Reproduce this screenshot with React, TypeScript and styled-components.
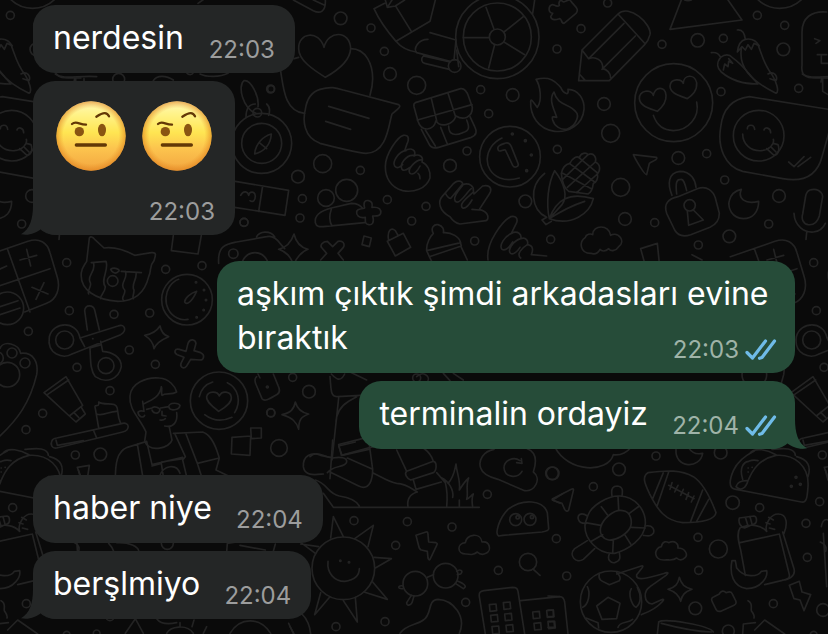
import React from "react";
import styled, { createGlobalStyle, css } from "styled-components";

const GlobalStyle = createGlobalStyle`
  *, *::before, *::after { box-sizing: border-box; }
  html, body, #root { height: 100%; }
  body {
    margin: 0;
    background: #0a0a0a;
    font-family: Inter, "Liberation Sans", sans-serif;
    overflow: hidden;
  }
`;

type Side = "in" | "out";

const Screen = styled.main`
  position: relative;
  min-height: 100%;
  background: #0a0a0a;
`;

const WallpaperLayer = styled.svg`
  position: absolute;
  inset: 0;
  width: 100%;
  height: 100%;
  fill: none;
  stroke: #232323;
  stroke-width: 5;
  stroke-linecap: round;
  stroke-linejoin: round;
`;

const Conversation = styled.ol`
  position: relative;
  display: flex;
  flex-direction: column;
  gap: 26px;
  margin: 0;
  padding: 5px 33px 15px;
  list-style: none;
`;

const Group = styled.li<{ $side: Side }>`
  display: flex;
  flex-direction: column;
  align-items: ${(p) => (p.$side === "out" ? "flex-end" : "flex-start")};
  gap: 8px;
`;

const Bubble = styled.article<{ $side: Side }>`
  position: relative;
  isolation: isolate;
  display: grid;
  max-width: min(578px, 100%);
  padding: 11px 20px 7px;
  border-radius: 22px;
  color: #fff;
  background: #242626;
  ${(p) =>
    p.$side === "out" &&
    css`
      padding-right: 18px;
      background: #264c39;
    `}
`;

const Text = styled.p<{ $side: Side }>`
  grid-area: 1 / 1;
  margin: 0;
  padding-bottom: 6px;
  font-size: 32px;
  line-height: 44px;
  &::after {
    content: "";
    display: inline-block;
    width: ${(p) => (p.$side === "out" ? 129 : 91)}px;
  }
`;

const Emojis = styled.div`
  grid-area: 1 / 1;
  display: flex;
  gap: 16px;
  padding: 9px 3px 57px;
`;

const Meta = styled.footer`
  grid-area: 1 / 1;
  place-self: end;
  display: flex;
  align-items: center;
  gap: 6px;
  height: 32px;
`;

const Time = styled.time<{ $side: Side }>`
  font-size: 24px;
  line-height: 32px;
  color: ${(p) => (p.$side === "out" ? "#9fb3a8" : "#9c9d9d")};
`;

const TailShape = styled.svg<{ $side: Side }>`
  position: absolute;
  z-index: -1;
  bottom: 0;
  width: 36px;
  height: 30px;
  ${(p) =>
    p.$side === "out"
      ? css`
          right: -12px;
          fill: #264c39;
          transform: scaleX(-1);
        `
      : css`
          left: -12px;
          fill: #242626;
        `}
`;

function Tail({ side }: { side: Side }) {
  return (
    <TailShape $side={side} viewBox="0 0 36 30" aria-hidden="true">
      <path d="M12 0C12 14 9 24 0 29.300C8 31 15 28 20 24C25 28 30 30 36 30V0Z" />
    </TailShape>
  );
}

function ReadTicks() {
  return (
    <svg width="32" height="22" viewBox="0 0 32 22" role="img" aria-label="Read" fill="none" stroke="#6fbbe8" strokeWidth="3.200" strokeLinecap="round" strokeLinejoin="round">
      <path d="M2 13.500L7.500 19L20.500 2" />
      <path d="M14.500 19.300L17 18.500L29.500 2" />
    </svg>
  );
}

function RaisedBrowFace({ id }: { id: string }) {
  return (
    <svg width="70" height="70" viewBox="0 0 210 210" role="img" aria-label="Face with raised eyebrow">
      <defs>
        <linearGradient id={`${id}-skin`} x1="0" y1="0" x2="0" y2="1">
          <stop offset="0" stopColor="#fff9b8" />
          <stop offset="0.180" stopColor="#fff38a" />
          <stop offset="0.450" stopColor="#ffe552" />
          <stop offset="0.680" stopColor="#fcc44e" />
          <stop offset="1" stopColor="#f3a640" />
        </linearGradient>
        <radialGradient id={`${id}-edge`} cx="0.500" cy="0.500" r="0.500">
          <stop offset="0.800" stopColor="#e88a20" stopOpacity="0" />
          <stop offset="1" stopColor="#dd7e1c" stopOpacity="0.600" />
        </radialGradient>
      </defs>
      <circle cx="105" cy="105" r="104" fill={`url(#${id}-skin)`} />
      <circle cx="105" cy="105" r="104" fill={`url(#${id}-edge)`} />
      <circle cx="70" cy="92" r="14" fill="#8a5512" />
      <ellipse cx="138" cy="87" rx="12" ry="19" fill="#8a5512" />
      <g fill="none" stroke="#633806" strokeLinecap="round" strokeLinejoin="round">
        <path d="M48 69C60 58 68 70 90 71" strokeWidth="7" />
        <path d="M121 47C143 33 153 33 159 46" strokeWidth="7" />
        <path d="M61 132H148" strokeWidth="10" />
      </g>
    </svg>
  );
}

type Doodle = { at: [number, number]; dots: number[][]; lines: string[] };

const doodles: Doodle[] = [
  {
    at: [0, 0],
    dots: [[356, 238, 18], [785, 430, 90], [785, 430, 60], [812, 267, 12], [732, 667, 12], [772, 338, 13]],
    lines: [
      "M768 340C728 326 712 256 732 242C752 238 778 288 774 320",
      "M738 352C738 320 750 312 766 312M800 312C812 322 810 334 806 346",
      "M764 462C766 432 790 408 814 402C812 434 792 454 764 462ZM778 428L800 446",
      "M594 10L620-8M166 222C192 240 230 226 290 230M224 236L222 246M252 236V246M460 242C470 224 500 226 520 240M560 218C566 226 576 226 580 218M600 222C620 232 660 232 684 220",
    ],
  },
  {
    at: [810, 0],
    dots: [
      [212, 55, 19], [303, 84, 12], [343, 154, 12], [360, 222, 19], [440, 256, 27], [3, 267, 10], [158, 491, 27], [84, 530, 19],
      [271, 511, 12], [97, 596, 12], [90, 654, 12], [352, 599, 12], [425, 663, 12], [468, 619, 12], [540, 497, 19], [591, 453, 12],
      [656, 341, 12], [632, 269, 12], [728, 285, 19], [766, 604, 19], [614, 723, 12], [682, 111, 125], [682, 111, 102], [682, 111, 24],
      [554, 198, 19], [168, 594, 25], [230, 571, 33], [720, 470, 91], [727, 402, 3], [766, 422, 3], [784, 465, 3], [770, 512, 3],
    ],
    lines: [
      "M166 232C128 208 86 180 86 146C84 98 146 88 162 142C174 90 240 90 242 146C240 182 202 212 166 232Z",
      "M242 146C290 146 308 196 308 236C308 256 304 272 300 286M86 172L72 176M32 214C40 262 44 336 104 340",
      "M150 268C184 258 200 264 220 270L386 314C398 320 374 334 366 342C356 372 352 460 288 460C270 460 180 438 150 430C100 412 98 360 106 328C110 300 124 276 150 268Z",
      "M176 319L297 355M167 364L242 388",
      "M70 0L130 32C150 42 168 36 166 0M130 0L164 16",
      "M344 10L312 26C330 66 350 92 378 124L480 64L496 0M378 124C396 146 424 154 438 156M378 20L424 94M346 0L352 22L376 18L404 0M352 22C360 10 362 6 366 0",
      "M480 98L558 120M474 118C442 118 430 148 440 158L540 184M558 120L552 180M460 168C452 176 454 188 464 190L538 208M460 168L540 186",
      "M648 22L672 88M760 50L702 96M580 113H658M656 204L674 134M764 164L702 126M788 40L794 0M560 150L566 200",
      "M436 308L572 266C584 264 590 272 596 290L607 322C608 352 580 362 558 348C548 376 510 384 498 362C490 394 454 396 444 364L432 320Q430 310 436 308Z",
      "M484 296L500 362M534 280L556 348M442 360L606 314M454 388L476 430C482 444 492 446 506 442L604 412C622 404 620 392 614 380L600 350M466 390L496 438M512 382L532 432M536 378C536 406 556 408 578 398C600 392 598 380 590 360",
      "M346 500C346 460 384 410 400 406C418 404 418 418 410 434L404 452C426 440 440 452 432 468C446 460 462 470 456 486C474 494 482 514 480 534C468 568 430 578 398 572C360 562 346 530 346 500ZM408 452C386 454 366 486 374 498C382 508 392 500 398 494M430 466C408 464 388 494 396 508C404 516 412 508 420 502M456 480C438 478 410 508 420 520C432 528 444 510 450 498M444 520Q450 524 450 536",
      "M696 414C640 440 636 512 690 534C710 542 728 540 748 534M686 452C678 440 690 434 704 430C714 426 720 430 724 440L744 490C748 500 734 506 728 496L706 450C698 448 692 456 686 452Z",
      "M136 668C132 640 160 630 184 624L244 610C262 610 272 616 278 626M136 668C140 682 150 680 160 680L284 668M184 628C176 650 180 668 186 678M284 624C278 604 288 600 296 602C306 604 308 612 306 622C330 620 334 630 332 640C328 650 318 648 308 648C314 668 306 676 296 674C284 672 286 664 286 652C266 656 258 644 260 634C264 624 274 628 284 624Z",
      "M540 650C506 632 504 604 516 590L544 558C562 534 580 544 578 554C598 546 612 560 610 572L612 582L638 558C664 552 666 570 658 582L628 628C660 636 656 658 648 662L570 672Q552 668 540 650ZM576 554L546 590C542 600 534 594 526 580M578 556C562 574 544 600 560 606C572 610 592 574 604 566M610 576C596 590 564 612 578 624C588 628 600 610 606 600M606 628L628 630",
      "M72 702C78 728 90 742 114 748C92 756 80 772 70 796C64 770 50 756 26 748C50 742 64 726 72 702Z",
      "M172 724L188 740L204 724C218 720 226 732 220 742L204 760L220 780M172 724C158 724 148 736 156 744L170 760L152 780M282 708L304 714L298 740L276 734ZM352 724L400 700L422 742L376 768ZM356 722C350 690 364 682 376 692L384 706",
      "M470 752C468 730 482 708 490 700C480 682 494 672 504 674C520 678 522 690 520 698C546 696 568 712 572 728ZM470 752L478 770L574 738L570 724M478 770L488 790M574 742L592 780",
      "M654 780C646 726 700 662 722 650C738 646 744 656 740 668L724 700C744 690 756 704 752 716C768 710 776 724 772 734C790 736 790 750 784 764M726 700C704 708 686 736 696 748C708 756 722 736 728 726M752 716C730 722 710 752 722 760C730 766 744 752 750 742M772 734C756 744 738 762 752 774M784 764L830 768",
    ],
  },
  {
    at: [1644, 0],
    dots: [
      [179, 9, 12], [99, 86, 12], [27, 147, 12], [342, 133, 12], [449, 121, 20], [526, 115, 12], [628, 46, 12], [710, 76, 12],
      [706, 148, 19], [752, 265, 12], [168, 312, 19], [188, 400, 27], [519, 275, 12], [28, 448, 12], [391, 474, 19], [476, 461, 12],
      [530, 540, 12], [218, 562, 27], [231, 657, 19], [320, 668, 12], [544, 709, 19], [451, 735, 12], [693, 588, 19], [662, 672, 12],
      [377, 308, 117], [632, 407, 76], [425, 616, 17], [695, -70, 95], [8, 718, 12],
    ],
    lines: [
      "M40 0C46 14 60-4 66 0C78 18 96 26 84 40L48 70C38 70 42 54 34 56C24 60 12 62 8 50L14 40C0 38 0 18 12 14C18 12 26 24 34 16Q30 4 40 0ZM400 0L366 88L582 60L540 0M410 0Q420 4 430 0",
      "M92 242L102 150L210 42C244 10 312 72 306 104C302 120 296 128 290 134L184 242ZM102 150L122 176C142 168 166 180 164 206C176 208 188 218 188 234M122 176L228 70M162 208L262 108M210 42L292 132M94 222L112 242",
      "M-36 238C12 226 26 250 38 262C46 280 64 290 60 268C92 268 110 300 108 328C104 376 60 398 20 394C-30 388-54 346-52 304C-50 294-44 308-32 322C-16 300-24 256-36 238ZM18 276C0 300 20 330 26 352C16 352 10 344 14 360C20 380 38 390 56 388C86 378 94 346 84 336C66 310 28 318 18 276Z",
      "M328 334C302 324 276 318 274 296C274 270 310 266 316 286C320 260 352 256 354 286C356 308 342 322 328 334ZM418 296C392 286 366 280 366 258C368 234 400 236 406 250C406 224 440 220 446 248C448 272 434 284 418 296ZM316 346C328 380 348 390 376 392C420 392 456 352 446 306",
      "M490 158C504 156 514 164 518 172M518 172C504 190 508 206 520 216C550 242 590 252 628 252M518 172C530 162 544 162 552 172C590 198 606 228 630 252M526 210L530 192L540 200L542 184L554 190L542 176",
      "M568 90C584 88 590 100 592 118M592 118C574 122 570 140 568 156L582 140L592 150L600 134L610 148L618 130L634 138C626 124 612 114 592 118M580 146C572 200 604 240 684 280C696 274 682 240 672 224C648 194 644 170 632 140M660 222C680 212 690 230 684 242L666 236",
      "M836 36C790 32 762 54 762 96V196C758 228 776 234 800 234H840M824 236V274L840 284M800 116L816 122L804 130M808 164H836M820 164V190H840",
      "M604 290L842 328M604 290C554 296 524 326 518 382C508 440 530 500 584 514L704 536C770 548 808 524 822 470L842 400M598 386C598 374 618 370 620 388M648 390C650 380 668 382 668 398M584 402C584 430 606 454 640 452C664 450 680 432 676 418M656 446L678 466C694 464 694 444 690 434L676 430M668 440L684 456M722 486L738 500L768 470M750 500L788 472",
      "M256 464L326 472C330 480 312 484 304 490L296 524C290 526 262 478 256 464Z",
      "M20 512C50 550 60 590 42 614L4 656C-6 610 0 550 20 512ZM4 656C24 600 62 574 136 596C126 640 70 680 4 656ZM4 656Q60 620 110 604M-4 652L-18 660L-6 674L10 664M-10 520C-60 560-50 630-4 652",
      "M40 520C44 500 56 492 66 490C72 474 88 466 94 474C98 456 116 458 120 464C138 456 146 474 142 486C160 494 156 514 148 520C152 536 144 548 136 550C134 566 128 578 120 582L62 574C50 566 42 544 40 520ZM44 520L130 566M64 490L140 546M92 472L150 520M58 562L142 486M44 538L120 464M86 578L148 522",
      "M372 586C358 552 360 518 396 514C430 514 442 542 444 562M386 582C382 546 386 538 398 538C408 536 412 556 416 572M390 590L448 566C478 556 496 574 502 594L514 640C514 660 504 674 486 682L428 704C404 712 388 704 380 690L356 640C346 610 362 596 390 590ZM418 634L422 676L466 660L436 630",
      "M580 568C568 596 592 614 632 604C632 636 614 656 586 656C552 654 538 624 544 602C548 584 562 572 580 568ZM786 570C806 564 822 574 824 590L814 648C808 668 796 676 780 674C764 670 760 656 764 642L772 594Q774 574 786 570ZM738 640C740 680 770 698 796 696C812 694 826 684 832 670M776 698L774 718",
      "M128 760C96 760 92 726 112 712C114 702 128 700 134 704C134 674 184 672 188 706C212 694 234 724 212 740C204 752 190 756 182 746C172 756 160 754 156 748C150 760 140 764 128 760ZM278 746L328 730L334 790M278 746L290 790M432 764L462 780",
    ],
  },
  {
    at: [540, 540],
    dots: [[192, 127, 12], [160, 221, 14], [225, 258, 40]],
    lines: [
      "M166 4L326 31L315 106L164 82M248 18L236 94M182 46C190 30 204 34 206 46C208 34 224 32 226 48C226 62 218 68 210 62",
      "M116 250C112 196 140 192 170 186L260 170C276 166 290 176 300 190L314 206M230 170C238 154 270 150 284 170",
    ],
  },
  {
    at: [0, 690],
    dots: [
      [200, 98, 12], [497, 118, 12], [606, 107, 12], [208, 242, 12], [342, 253, 12], [449, 249, 12], [85, 304, 12], [388, 360, 12],
      [231, 412, 12], [466, 403, 12], [330, 482, 12], [128, 550, 12], [78, 599, 12], [301, 673, 19], [813, 549, 12],
      [561, 209, 76], [194, 330, 27], [318, 407, 24], [657, 512, 86], [338, 153, 16], [22, 235, 49], [36, 369, 15], [75, 399, 15], [22, 434, 37],
      [612, 180, 2], [618, 210, 2], [611, 240, 2], [590, 262, 2], [588, 157, 2], [802, 471, 3], [-8, 384, 18],
    ],
    lines: [
      "M-50 80L84 34C118 22 142 38 150 68L172 142C182 176 170 208 140 220L74 246M22 56L90 246M-10 170L150 116M60 90L110 76M80 58L92 108M96 172L144 192M132 158L108 208M-20 126L20 108M0 230L54 212M0 254L60 234",
      "M268 24Q274 16 284 28L312 54C342 50 370 58 404 76L454 68C472 66 466 78 462 92C446 110 456 120 446 140C434 190 400 214 354 214C290 210 238 180 244 128C246 112 254 104 260 94ZM274 98L318 94C328 120 300 150 316 170C316 186 300 196 302 206M280 98C290 124 260 136 270 156C278 168 260 180 266 192M364 124L424 128M376 124C386 146 356 160 374 180C378 192 362 202 370 210M408 128C412 148 392 164 402 180C402 196 396 200 400 206M332 118C342 110 362 118 356 124C348 134 336 128 332 118",
      "M520 16L514 62L594 72L604 16",
      "M536 148C490 164 482 240 532 264C544 270 556 270 564 268M590 184C572 190 554 204 554 216C560 226 574 218 590 184Z",
      "M240 324C230 270 160 274 148 320C140 374 190 388 216 372L362 314C384 300 372 280 354 288L240 324ZM262 300L254 242C256 222 280 224 284 240L298 300M240 324L254 350M270 354C272 390 270 420 286 440C318 462 356 448 364 410C364 380 336 366 308 364L302 334M270 354L304 344M278 326H279",
      "M480 288C484 308 492 316 506 320C482 330 468 340 462 356C460 338 450 326 434 316C456 312 470 304 480 288ZM564 340C570 324 586 328 588 340L582 362L602 368C616 374 612 390 600 390L572 388L560 408C550 420 538 410 544 398L552 382L532 374C520 368 524 354 538 358L558 364Z",
      "M0 355C10 330 56 340 62 370C100 366 116 396 110 434C90 520 50 570 0 618",
      "M132 488L198 440L248 526L208 558ZM142 494L206 450M208 558L228 576L256 552L244 532M222 548L236 562",
      "M156 632C150 644 156 656 170 654L368 606C392 600 388 576 368 580L170 624Q158 626 156 632ZM280 600L290 624M296 594L286 536C280 518 300 536 296 516C312 528 344 514 350 530C356 540 350 556 362 580M290 552C310 560 330 542 352 544",
      "M438 606C420 564 386 540 390 498C392 460 440 440 478 444C508 446 526 470 530 486C514 496 496 488 486 496C482 488 488 478 484 470C480 502 452 512 430 522M438 606L434 634C450 670 510 654 516 630L508 592M414 546C414 560 430 566 434 556M428 514L432 544C420 540 416 544 414 548M440 538L456 534C462 526 480 534 480 540C474 556 458 548 456 540M482 534L506 530C508 516 536 518 540 526C538 540 510 546 506 530M530 548C534 576 520 594 494 588M486 544V556L498 558M480 570Q490 572 496 566",
      "M440 634L382 652C350 666 346 700 346 750M412 642L430 750M440 634L456 704L548 682M520 610L608 606C640 616 652 666 658 684L592 700L608 750M524 610L556 680L548 690L560 740M558 612L592 700M456 708L484 700L490 740M484 696L550 686M478 740C490 704 530 700 540 730M658 684L648 720L690 740",
      "M598 500Q606 466 638 456M682 458C716 474 724 516 704 548M614 554C640 574 670 574 696 562M656 544C640 532 618 516 620 500C624 482 652 482 658 498C666 480 692 484 694 502C696 520 672 534 656 544Z",
      "M696 622L752 618L750 676L694 672ZM752 594H784V624L754 626ZM770 440C762 446 766 460 770 468L786 506C794 516 806 508 830 494C842 488 838 474 834 466L820 432M774 432L780 444",
      "M232 712L268 706L262 746M232 712L244 744M886 516C892 538 904 548 926 552C904 560 896 568 896 598C890 576 878 564 846 554C872 548 882 538 886 516Z",
    ],
  },
  {
    at: [630, 750],
    dots: [[248, 382, 12], [297, 425, 19], [182, 488, 12], [207, 594, 25], [620, 384, 12]],
    lines: [
      "M360 380C364 420 360 440 384 440L450 436M404 372C390 400 376 384 364 372M386 444L366 630M416 454L440 440M416 454C390 470 378 490 378 520M420 366L470 390M620 380C640 360 660 380 654 392M700 370L720 392M730 370L760 390",
      "M386 584L480 560M386 584L394 616L490 590M300 620C320 600 340 620 360 622",
    ],
  },
  {
    at: [0, 1320],
    dots: [[502, 310, 18], [330, 530, 12], [290, 580, 10], [200, 584, 10]],
    lines: [
      "M168 0L172 16L250 2M220 306C234 312 240 320 236 334M326 310C336 320 340 330 342 336M350 308C390 306 414 320 416 332M680 336L682 310L710 306M720 316L796 330M820 334L826 312M376 580L406 536L430 580M470 536C480 550 500 554 530 548M500 580C510 560 560 550 580 580M540 548V560M582 540L576 560M690 580C720 530 780 530 812 580M620 560L610 580M866 550L880 580",
    ],
  },
  {
    at: [870, 1320],
    dots: [
      [786, 100, 19], [592, 163, 12], [192, 242, 12], [352, 245, 12], [486, 261, 12], [317, 316, 12], [625, 391, 12], [527, 487, 12],
      [285, 545, 12], [138, 560, 12], [160, 385, 94], [677, 239, 18], [720, 238, 18], [683, 232, 5], [726, 231, 5],
      [376, 431, 37], [467, 407, 37], [714, 366, 26], [151, 362, 2], [177, 367, 2],
    ],
    lines: [
      "M128 0L120 116M100 102C76 104 44 110 40 80C38 48 64 34 92 46L128 54C150 50 172 52 170 66C166 84 130 74 112 98M146 18L196 6M146 18L156 46L236 28M172 54L248 88L236 0M120 96L206 138C240 154 248 116 248 88M248 98C276 112 296 126 320 130C352 132 364 146 382 156C360 162 350 176 354 202M76 120C112 130 112 160 148 168C176 172 198 180 208 198M100 160L130 202H568",
      "M320 30L350 94M350 94L430 64C442 66 440 92 430 98L362 120C350 116 342 100 350 94ZM370 120L378 148L454 126M400 24C420 38 426 50 430 64M440 98L466 128C472 152 472 180 470 200M456 114C476 124 492 150 488 172M474 130C492 112 494 90 498 72C500 100 512 120 508 150C516 138 524 124 536 114C526 136 536 160 530 178C538 174 544 166 550 162C544 176 546 190 548 202M508 180V202",
      "M612 28C580 34 564 60 572 84C578 104 600 112 624 118L704 152C734 156 756 116 730 96C742 60 738 36 712 26M690 62C670 48 642 62 642 84C644 112 682 118 696 94M680 68L696 70L694 56",
      "M122 294L130 230L160 290M194 296L250 256L234 320M252 352L304 356L256 384M248 426L292 478L222 456M196 472L202 546L160 482M92 458L74 524L120 470M32 312L86 320M36 310L76 340M114 364C110 400 134 424 164 424C190 420 208 408 208 386",
      "M378 286L408 276Q414 274 414 284L416 306L438 308Q444 310 440 316L420 358Q416 362 414 354L412 334L394 330Q388 328 386 318Z",
      "M528 342C500 342 500 310 526 308C528 282 572 276 576 306C600 302 606 332 588 340C576 346 568 342 562 336C550 346 540 344 528 342Z",
      "M412 412L430 404M364 466L350 488C350 500 362 496 366 488L372 468M340 438C322 434 322 448 338 446M500 394C510 386 522 392 512 402L502 404M496 430L520 446C532 440 524 432 504 424M730 388L750 406",
      "M626 288C614 282 626 236 654 208C700 174 760 180 772 218L776 266C776 272 766 274 756 276L638 286ZM788 180L820 160M788 180L810 190",
      "M330 580C350 552 380 556 400 540C428 524 410 480 444 478C490 480 530 530 508 580M36 522C54 540 60 560 62 582M0 560L12 582",
      "M586 582L568 470C566 456 572 454 582 452L668 442C680 442 682 446 684 454L704 582M692 482L810 470M598 494L618 492L620 512L600 514ZM640 488L660 486L662 506L642 508ZM602 526L622 524L624 544L604 546ZM644 522L664 520L666 540L646 542ZM606 560L626 558L628 580L608 582ZM648 556L668 554L670 574L650 576ZM728 516L748 514L750 534L730 536ZM770 512L790 510L792 530L772 532ZM732 550L752 548L754 568L734 570ZM774 546L794 544L796 564L776 566Z",
    ],
  },
  {
    at: [1644, 1320],
    dots: [
      [324, 48, 12], [14, 100, 19], [213, 88, 19], [136, 140, 12], [518, 38, 19], [554, 188, 20], [635, 203, 12], [823, 45, 12],
      [815, 185, 12], [774, 250, 12], [778, 352, 12], [450, 292, 12], [511, 327, 27], [452, 391, 12], [442, 505, 19], [676, 491, 12],
      [825, 510, 19], [56, 408, 12], [25, 296, 12], [189, 485, 92], [744, 112, 3], [757, 133, 3], [730, 139, 3], [541, 573, 18],
    ],
    lines: [
      "M20 20C60 100 180 100 196 44C220 48 240 34 250 20M384 28C380 86 456 88 464 40C444 44 430 36 424 26",
      "M14 176L70 148Q78 144 76 152L62 210Q56 218 50 208L42 190L18 182Q10 180 14 176Z",
      "M120 226C130 196 180 166 216 168C260 170 294 208 292 252C290 296 240 330 200 340C150 344 104 294 112 248ZM158 262C164 236 200 206 224 212C250 214 254 248 246 264C234 284 204 302 182 300C162 296 154 280 158 262ZM210 170L212 208M274 198L244 220M292 264L250 262M248 312L230 284M194 340L196 300M130 304L164 284M112 248L158 256M160 200L178 224",
      "M192 168C188 144 196 138 208 138C226 140 224 154 222 168M118 228C98 214 86 226 92 240C96 252 108 250 116 250M292 258C316 254 320 270 316 280C308 290 300 288 286 286M184 342C176 360 190 370 200 368C220 362 216 350 214 338M118 302L80 326C60 346 84 372 106 358L140 326",
      "M300 98C360 90 400 90 436 110C464 128 486 170 504 218C500 244 440 248 404 248C352 242 330 212 304 160C292 134 280 110 300 98ZM346 98L314 176M362 96L328 196M464 150L428 244M482 178L446 244M362 136L438 176M372 128L366 148M390 136L380 156M406 148L398 166M422 158L414 178M438 168L430 186",
      "M564 148C538 146 546 116 556 92C570 60 600 42 620 32M564 148L760 186C778 190 778 164 780 140C784 78 740 42 684 46C630 58 612 94 600 122C594 142 580 156 564 140C568 126 584 122 596 122M584 118C574 88 584 66 602 64C612 60 622 60 630 62M606 40C620 20 660 30 684 44M672 28C700 26 740 20 742 46M746 50C780 58 790 80 780 110M600 84H601M612 82H613M600 96H601",
      "M574 234C570 248 578 262 590 264L618 252C628 250 628 230 618 228ZM592 232L600 258M606 230L612 252M576 264C566 278 570 300 578 330L592 406M576 308L694 282M580 262C610 250 640 256 656 274M694 282L724 404C726 414 720 418 700 422L650 434M704 276L738 386C744 408 722 420 704 420M656 274C648 248 672 222 690 222C720 222 718 256 708 280M662 232L676 240M654 248L666 252M664 264L680 268",
      "M552 362C544 400 554 440 596 446C640 446 660 410 656 392L640 394C630 410 590 416 566 384L562 362Z",
      "M206 402L280 378Q288 376 282 384L266 404C262 426 300 414 356 398Q364 398 354 406L306 440C286 452 286 488 312 492L344 478Q350 478 342 486C320 510 300 516 280 524",
      "M146 498L180 472L216 490L206 536L162 538ZM154 402C148 424 170 426 184 434L214 422C222 412 212 404 206 398M118 440C128 458 122 494 104 502M250 446C240 462 250 494 264 502C280 490 280 466 268 442M114 534L150 548L152 564M210 562C214 544 240 550 254 538",
      "M394 412C400 434 410 442 432 448C410 456 402 464 398 484C392 464 382 456 360 448C382 442 390 432 394 412Z",
      "M350 360C316 362 316 324 340 320C344 302 356 304 362 308C380 300 392 310 390 324C412 324 420 344 412 352C402 362 392 360 386 354C374 364 362 358 350 360Z",
      "M498 470C488 474 490 480 494 488L504 508C508 516 514 516 522 512L558 496C566 492 566 486 560 476L552 460C548 452 540 456 534 458C526 450 516 454 514 462ZM600 482C616 490 608 502 610 512C616 520 620 528 618 534",
      "M724 436L754 424L762 456L788 464L768 512L756 480L738 476ZM332 546C350 534 484 556 496 576M332 546L328 582M340 550C370 558 430 574 490 576M584 582L586 552L622 548M620 570L650 540L710 582M832 90L840 120M820 260C824 236 836 236 842 242M826 280L836 440M0 468L36 470C44 470 48 476 50 486L60 582M0 510L16 510V530H0M0 544L18 544L20 562H0",
    ],
  },
];

/* The doodle sheet is 2241 units wide and repeats sideways. */
const repeats = [-2241, 0, 2241];

function Wallpaper() {
  return (
    <WallpaperLayer viewBox="0 0 2484 1902" preserveAspectRatio="xMidYMid slice" aria-hidden="true">
      <defs>
        <g id="doodle-sheet">
          {doodles.map((d, i) => (
            <g key={i} transform={`translate(${d.at[0]} ${d.at[1]})`}>
              {d.dots.map(([x, y, r], n) => (
                <circle key={n} cx={x} cy={y} r={r} />
              ))}
              {d.lines.map((line, n) => (
                <path key={n} d={line} />
              ))}
            </g>
          ))}
        </g>
      </defs>
      {repeats.map((x) => (
        <use key={x} href="#doodle-sheet" x={x} />
      ))}
    </WallpaperLayer>
  );
}

type Message = { text?: string; faces?: number; time: string; tail?: boolean };
type Run = { side: Side; messages: Message[] };

const runs: Run[] = [
  { side: "in", messages: [{ text: "nerdesin", time: "22:03" }, { faces: 2, time: "22:03", tail: true }] },
  {
    side: "out",
    messages: [
      { text: "aşkım çıktık şimdi arkadasları evine bıraktık", time: "22:03" },
      { text: "terminalin ordayiz", time: "22:04", tail: true },
    ],
  },
  { side: "in", messages: [{ text: "haber niye", time: "22:04" }, { text: "berşlmiyo", time: "22:04", tail: true }] },
];

function MessageBubble({ side, message }: { side: Side; message: Message }) {
  return (
    <Bubble $side={side}>
      {message.tail && <Tail side={side} />}
      {message.text ? (
        <Text $side={side}>{message.text}</Text>
      ) : (
        <Emojis>
          {Array.from({ length: message.faces ?? 0 }, (_, i) => (
            <RaisedBrowFace key={i} id={`face-${i}`} />
          ))}
        </Emojis>
      )}
      <Meta>
        <Time $side={side}>{message.time}</Time>
        {side === "out" && <ReadTicks />}
      </Meta>
    </Bubble>
  );
}

export default function App() {
  return (
    <Screen>
      <GlobalStyle />
      <Wallpaper />
      <Conversation>
        {runs.map((run, i) => (
          <Group key={i} $side={run.side}>
            {run.messages.map((message, n) => (
              <MessageBubble key={n} side={run.side} message={message} />
            ))}
          </Group>
        ))}
      </Conversation>
    </Screen>
  );
}
